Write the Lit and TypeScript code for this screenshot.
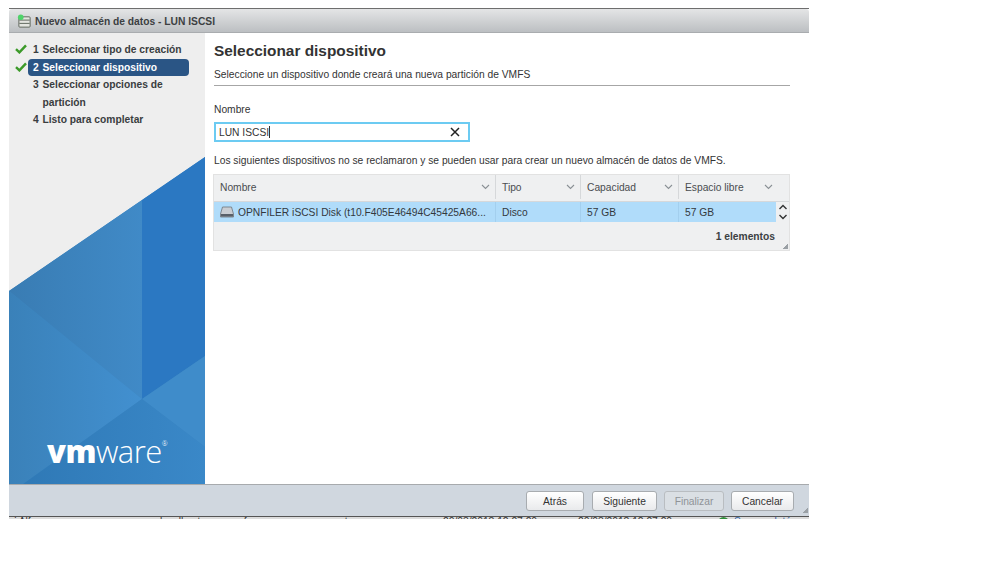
import { css, html, LitElement } from 'lit';
import { customElement } from 'lit/decorators.js';

const STEPS = [
  { n: '1', label: 'Seleccionar tipo de creación', done: true },
  { n: '2', label: 'Seleccionar dispositivo', done: true, active: true },
  { n: '3', label: 'Seleccionar opciones de partición' },
  { n: '4', label: 'Listo para completar' },
];

const COLUMNS = ['Nombre', 'Tipo', 'Capacidad', 'Espacio libre'];
const BUTTONS = ['Atrás', 'Siguiente', 'Finalizar', 'Cancelar'];

const check = html`<svg class="check" viewBox="0 0 12 10" width="12" height="10">
  <path d="M1 5.2 L4.4 8.4 L11 1.4" fill="none" stroke="#3c9a2a" stroke-width="2.4" />
</svg>`;

const chevron = html`<svg class="chevron" viewBox="0 0 9 6" width="9" height="6">
  <path d="M1 1 L4.5 4.5 L8 1" fill="none" stroke="#8a9095" stroke-width="1.1" />
</svg>`;

@customElement('app-root')
export class AppRoot extends LitElement {
  render() {
    return html`
      <div class="top-strip"></div>
      <div class="window">
        <div class="titlebar">
          <svg viewBox="0 0 16 16" width="15" height="15">
            <rect x="2" y="3" width="12" height="11" rx="1" fill="#e4e5e0" stroke="#5b6258" />
            <path d="M2.5 6.5 H13.5 M2.5 10 H13.5" stroke="#5b6258" />
            <circle cx="4" cy="3.5" r="3" fill="#4fd36a" />
          </svg>
          <span>Nuevo almacén de datos - LUN ISCSI</span>
        </div>
        <div class="body">
          ${this.renderSidebar()}
          <main class="content">
            <h1>Seleccionar dispositivo</h1>
            <p class="subtitle">Seleccione un dispositivo donde creará una nueva partición de VMFS</p>
            <label>Nombre</label>
            <div class="input">
              <span class="value">LUN ISCSI</span><span class="caret"></span>
              <svg viewBox="0 0 10 10" width="10" height="10">
                <path d="M1 1 L9 9 M9 1 L1 9" stroke="#222" stroke-width="1.5" />
              </svg>
            </div>
            <p class="hint">
              Los siguientes dispositivos no se reclamaron y se pueden usar para crear un nuevo almacén de datos de VMFS.
            </p>
            ${this.renderTable()}
          </main>
        </div>
        <footer class="footer">
          ${BUTTONS.map(
            (b) => html`<button class=${b === 'Finalizar' ? 'off' : ''}>${b}</button>`
          )}
          <span class="grip"></span>
        </footer>
      </div>
      <div class="bottom-strip">
        <span class="col-a">ci Alfos</span>
        <span class="col-b">localhost.somevcsf.com</span>
        <span class="col-c">root</span>
        <span class="col-d">20/03/2018 12:27:20</span>
        <span class="col-e">20/03/2018 12:27:20</span>
        <i class="dot"></i>
        <span class="status">Se completó correctamente</span>
      </div>
    `;
  }

  private renderSidebar() {
    return html`
      <aside class="sidebar">
        <svg class="art" viewBox="0 0 196 451" width="196" height="451">
          <defs>
            <linearGradient id="facet" x1="0" x2="1" y1="0" y2="0">
              <stop offset="0" stop-color="#397cb3" />
              <stop offset="1" stop-color="#408ac7" />
            </linearGradient>
            <linearGradient id="lower" x1="0" x2="1" y1="0" y2="0">
              <stop offset="0" stop-color="#3a81b9" />
              <stop offset="1" stop-color="#4290d0" />
            </linearGradient>
            <linearGradient id="foot" x1="0" x2="1" y1="0" y2="0">
              <stop offset="0" stop-color="#2f79b6" />
              <stop offset="1" stop-color="#3a88c8" />
            </linearGradient>
          </defs>
          <polygon points="0,258 196,124 196,451 0,451" fill="#3a84c0" />
          <polygon points="0,258 133,167 133,366" fill="url(#facet)" />
          <polygon points="133,167 196,124 196,323 133,366" fill="#2b78c2" />
          <polygon points="0,258 133,366 14,451 0,451" fill="url(#lower)" />
          <polygon points="133,366 196,323 196,414" fill="#3f8cca" />
          <polygon points="133,366 196,414 196,451 14,451" fill="url(#foot)" />
        </svg>
        <ul class="steps">
          ${STEPS.map(
            (s) => html`<li class=${s.active ? 'step active' : 'step'}>
              ${s.done ? check : ''}
              <span class="num">${s.n}</span><span>${s.label}</span>
            </li>`
          )}
        </ul>
        <div class="logo"><b>vm</b>ware<sup>®</sup></div>
      </aside>
    `;
  }

  private renderTable() {
    return html`
      <div class="table">
        <div class="row head">
          ${COLUMNS.map((c) => html`<div class="cell"><span>${c}</span>${chevron}</div>`)}
        </div>
        <div class="row selected">
          <div class="cell name">
            <svg viewBox="0 0 14 12" width="14" height="12">
              <path d="M2.5 1 H11.5 L13.5 8 V11 H.5 V8 Z" fill="#c9cdd2" stroke="#6d747b" stroke-width=".8" />
              <rect x="1" y="8" width="12" height="2.6" fill="#596069" />
            </svg>
            <span class="ellipsis">OPNFILER iSCSI Disk (t10.F405E46494C45425A66...</span>
          </div>
          <div class="cell">Disco</div>
          <div class="cell">57 GB</div>
          <div class="cell">57 GB</div>
          <div class="scroll">
            <svg viewBox="0 0 10 18" width="10" height="18">
              <path d="M1.5 6 L5 2.5 L8.5 6 M1.5 12 L5 15.5 L8.5 12" fill="none" stroke="#333" stroke-width="1.4" />
            </svg>
          </div>
        </div>
        <div class="table-foot">1 elementos<span class="grip"></span></div>
      </div>
    `;
  }

  static styles = css`
    :host {
      display: block;
      width: 1008px;
      height: 567px;
      background: #fff;
      overflow: hidden;
      padding-top: 8px;
      box-sizing: border-box;
      font-family: 'Liberation Sans', Arial, sans-serif;
      font-size: 10.25px;
      color: #333;
    }
    .top-strip {
      width: 800px;
      height: 1px;
      margin-left: 9px;
      background: #6e6e6e;
    }
    .window {
      width: 800px;
      margin-left: 9px;
      background: #fff;
    }
    .titlebar {
      height: 24px;
      display: flex;
      align-items: center;
      gap: 3px;
      padding: 1px 0 0 8px;
      box-sizing: border-box;
      background: linear-gradient(#e4e5e6, #bcbfc2);
      border-bottom: 1px solid #a9acaf;
      border-radius: 3px 3px 0 0;
      font-weight: bold;
      color: #3c3f42;
    }
    .body {
      display: flex;
      height: 451px;
    }
    .sidebar {
      position: relative;
      width: 196px;
      flex: none;
      background: #eeeeee;
    }
    .art {
      position: absolute;
      inset: 0;
    }
    .steps {
      position: relative;
      list-style: none;
      margin: 0;
      padding: 8px 0 0;
      font-weight: bold;
      line-height: 17.5px;
      color: #3a3d40;
    }
    .step {
      position: relative;
      display: flex;
      margin-left: 19px;
      width: 161px;
      padding: 0 5px;
      box-sizing: border-box;
    }
    .step.active {
      background: #2a5585;
      color: #fff;
      border-radius: 4px;
    }
    .num {
      width: 9.5px;
      flex: none;
    }
    .check {
      position: absolute;
      left: -13px;
      top: 3px;
    }
    .logo {
      position: absolute;
      left: 38px;
      top: 398px;
      color: #fff;
      font-family: 'Open Sans', sans-serif;
      font-size: 31px;
      font-weight: 300;
      line-height: 40px;
      letter-spacing: -0.5px;
    }
    .logo b {
      font-weight: 800;
    }
    .logo sup {
      font-size: 7px;
      vertical-align: 17px;
      line-height: 0;
    }
    .content {
      flex: 1;
      padding: 8px 19px 0 9px;
      min-width: 0;
    }
    h1 {
      margin: 0;
      font-size: 15.4px;
      line-height: 20px;
      font-weight: bold;
      color: #333;
    }
    .subtitle {
      margin: 6px 0 0;
      line-height: 16px;
      padding-bottom: 2px;
      border-bottom: 1px solid #a6a6a6;
    }
    label {
      display: block;
      margin-top: 16px;
      line-height: 16px;
    }
    .input {
      display: flex;
      align-items: center;
      width: 256px;
      height: 20px;
      margin-top: 4px;
      padding: 0 8px 0 3px;
      box-sizing: border-box;
      border: 2px solid #6ccbf2;
    }
    .caret {
      width: 1px;
      height: 12px;
      background: #333;
    }
    .input svg {
      margin-left: auto;
    }
    .hint {
      margin: 11px 0 0;
      line-height: 16px;
    }
    .table {
      margin-top: 5px;
      border: 1px solid #e2e2e2;
      border-left-width: 0;
      background: #eff0f1;
      box-shadow: -1px 0 0 #e2e2e2;
    }
    .row {
      display: grid;
      grid-template-columns: 282px 85px 98px 97px 13px;
    }
    .head {
      height: 27px;
      padding-bottom: 2px;
      border-bottom: 1px solid #d6d8da;
      box-sizing: border-box;
      grid-template-columns: 282px 85px 98px 110px;
    }
    .head .cell {
      justify-content: space-between;
      padding-right: 5px;
      color: #4a4d50;
    }
    .head .cell:last-child {
      padding-right: 16px;
      border-right: none;
    }
    .cell {
      display: flex;
      align-items: center;
      padding-left: 6px;
      box-sizing: border-box;
      border-right: 1px solid #d6d8da;
      min-width: 0;
    }
    .selected {
      height: 20px;
      background: #b0dcfa;
    }
    .selected .cell {
      border-right-color: #a3cfee;
      color: #33383d;
      background: #b0dcfa;
    }
    .selected .cell:nth-child(4) {
      border-right: none;
    }
    .name {
      gap: 4px;
    }
    .name svg {
      flex: none;
    }
    .ellipsis {
      white-space: nowrap;
    }
    .scroll {
      background: #eff0f1;
      display: flex;
      align-items: center;
      justify-content: center;
    }
    .table-foot {
      position: relative;
      height: 28px;
      box-sizing: border-box;
      padding-right: 14px;
      display: flex;
      align-items: center;
      justify-content: flex-end;
      font-weight: bold;
      color: #3c4043;
    }
    .grip {
      position: absolute;
      right: 1px;
      bottom: 1px;
      width: 5px;
      height: 5px;
      background: linear-gradient(135deg, transparent 50%, #9aa0a5 50%);
    }
    .footer .grip {
      bottom: 4px;
    }
    .footer {
      position: relative;
      height: 33px;
      box-sizing: border-box;
      display: flex;
      justify-content: flex-end;
      align-items: flex-start;
      gap: 7px;
      padding: 6px 15px 0 0;
      background: #d0d7df;
      border-top: 1px solid #a7aaad;
    }
    button {
      height: 20px;
      padding: 0;
      font: inherit;
      color: #333;
      border: 1px solid #a8acb0;
      border-radius: 3px;
      background: linear-gradient(#ffffff, #e9eaec);
      width: 64px;
    }
    button:nth-child(1) {
      width: 58px;
      margin-right: 1px;
    }
    button:nth-child(2) {
      width: 65px;
    }
    button:nth-child(3) {
      width: 60px;
    }
    button:nth-child(4) {
      width: 63px;
    }
    button.off {
      color: #8f9398;
      background: #dadfe4;
      border-color: #b9bdc1;
    }
    .bottom-strip {
      position: relative;
      width: 800px;
      height: 3px;
      margin-left: 9px;
      margin-top: -1px;
      display: flex;
      overflow: hidden;
      background: #dcdcdc;
      border-top: 1px solid #555;
      box-sizing: border-box;
      color: #333;
      font-size: 10.25px;
      line-height: 11px;
      white-space: nowrap;
    }
    .bottom-strip span {
      flex: none;
      margin-top: -1px;
    }
    .col-a {
      width: 151px;
    }
    .col-b {
      width: 170px;
    }
    .col-c {
      width: 113px;
    }
    .col-d {
      width: 135px;
    }
    .col-e {
      width: 140px;
    }
    .dot {
      flex: none;
      width: 11px;
      height: 11px;
      margin-right: 5px;
      border-radius: 50%;
      background: #2f8f3a;
    }
    .bottom-strip .status {
      color: #2a5fa8;
    }
  `;
}
